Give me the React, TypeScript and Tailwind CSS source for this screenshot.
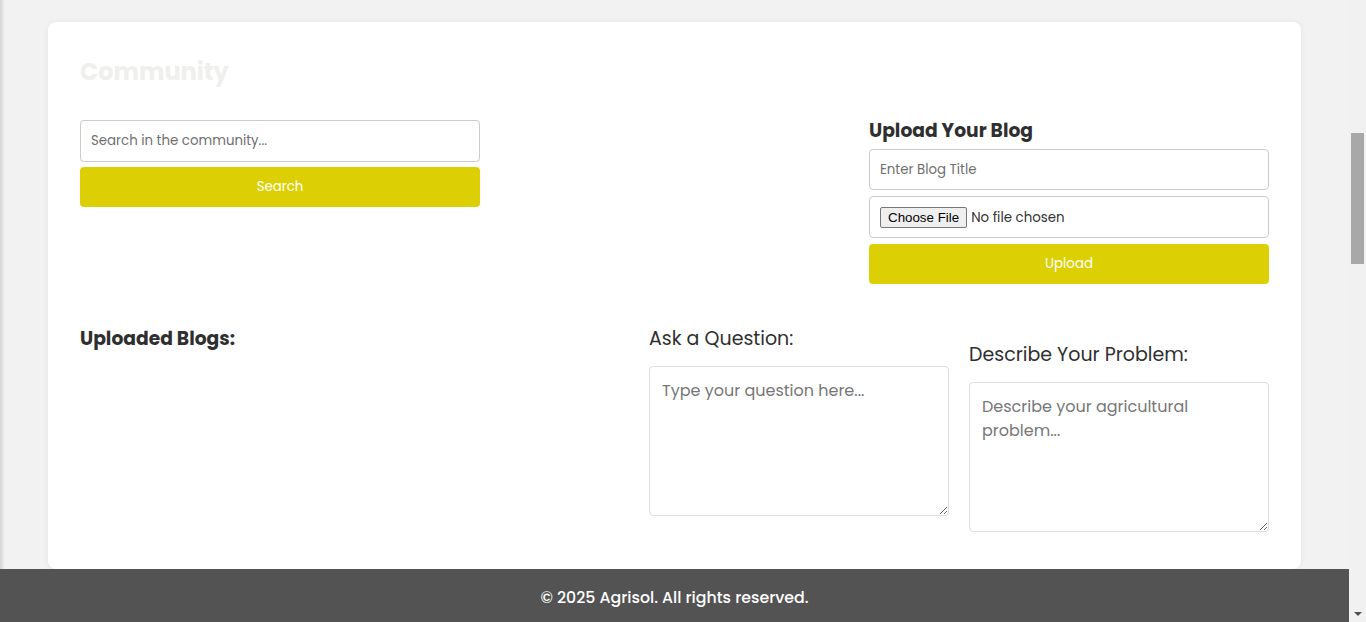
import React from 'react';

const font = "font-['Poppins','Inter',sans-serif]";

const Community: React.FC = () => {
    return (
        <div className="flex-1 rounded-lg bg-white p-8 shadow-[0_0_6px_rgba(0,0,0,0.06)]">
            <h2 className="text-[24px] font-bold leading-[36px] text-[#efefed]">Community</h2>

            {/* Search + upload */}
            <div className="mt-[26px] flex items-start justify-between">
                <div className="mt-1 flex w-[400px] flex-col gap-[5px]">
                    <input
                        type="text"
                        placeholder="Search in the community..."
                        className="h-[42px] rounded-[4px] border border-[#cccccc] px-[10px] text-[13.33px] placeholder:text-[#6f6f6f] outline-none"
                    />
                    <button className="h-10 rounded-[4px] bg-[#dcd005] text-[13.33px] text-white">Search</button>
                </div>

                <div className="flex w-[400px] flex-col">
                    <h3 className="mt-[2px] mb-[5px] text-[18.7px] font-bold leading-[26px] text-[#2f2f2f]">Upload Your Blog</h3>
                    <div className="flex flex-col gap-[6px]">
                        <input
                            type="text"
                            placeholder="Enter Blog Title"
                            className="h-[41px] rounded-[4px] border border-[#cccccc] px-[10px] text-[13.33px] placeholder:text-[#6f6f6f] outline-none"
                        />
                        <div className="flex h-[42px] items-center rounded-[4px] border border-[#cccccc] px-[10px] pt-px">
                            <input
                                type="file"
                                className="text-[13.4px] text-[#333] file:mr-1 file:h-[21px] file:rounded-[2px] file:border file:border-[#767676] file:bg-[#efefef] file:px-[7px] file:font-['Liberation_Sans',Arial,sans-serif] file:text-[13.33px] file:text-black"
                            />
                        </div>
                        <button className="h-10 rounded-[4px] bg-[#dcd005] text-[13.33px] text-white">Upload</button>
                    </div>
                </div>
            </div>

            {/* Blogs + questions */}
            <div className="mt-[42px] flex items-start gap-5">
                <div className="flex-1">
                    <h3 className="text-[18.7px] font-bold leading-[26px] text-[#2f2f2f]">Uploaded Blogs:</h3>
                </div>
                <div className="flex w-[300px] flex-col">
                    <label className="mb-[14px] text-[19px] leading-[26px] text-[#2f2f2f]">Ask a Question:</label>
                    <textarea
                        placeholder="Type your question here..."
                        className="h-[150px] rounded-[4px] border border-[#dddddd] p-3 text-base placeholder:text-[#777] outline-none"
                    />
                </div>
                <div className="mt-4 flex w-[300px] flex-col">
                    <label className="mb-[14px] text-[19px] leading-[26px] text-[#2f2f2f]">Describe Your Problem:</label>
                    <textarea
                        placeholder="Describe your agricultural problem..."
                        className="h-[150px] rounded-[4px] border border-[#dddddd] p-3 text-base placeholder:text-[#777] outline-none"
                    />
                </div>
            </div>
        </div>
    );
};

export default function App() {
    return (
        <div className={`flex h-[622px] overflow-hidden bg-[#f2f2f2] ${font}`}>
            <div className="flex min-w-0 flex-1 flex-col">
                {/* Content */}
                <div className="flex flex-1 bg-[linear-gradient(to_right,#d4d4d4,#f2f2f2_5px)] px-12 pt-[22px]">
                    <Community />
                </div>

                {/* Footer */}
                <footer className="flex h-[53px] items-center justify-center bg-[#535353] pt-[5px] text-[15.8px] font-medium text-white">
                    © 2025 Agrisol. All rights reserved.
                </footer>
            </div>

            {/* Scrollbar */}
            <div className="flex w-[17px] flex-col bg-[#f1f1f1]">
                <div className="h-[133px]" />
                <div className="mx-[2px] h-[131px] bg-[#a8a8a8]" />
                <div className="flex-1" />
                <div className="flex h-[17px] items-center justify-center">
                    <div className="h-0 w-0 border-x-[4px] border-t-[4px] border-x-transparent border-t-[#505050]" />
                </div>
            </div>
        </div>
    );
}
